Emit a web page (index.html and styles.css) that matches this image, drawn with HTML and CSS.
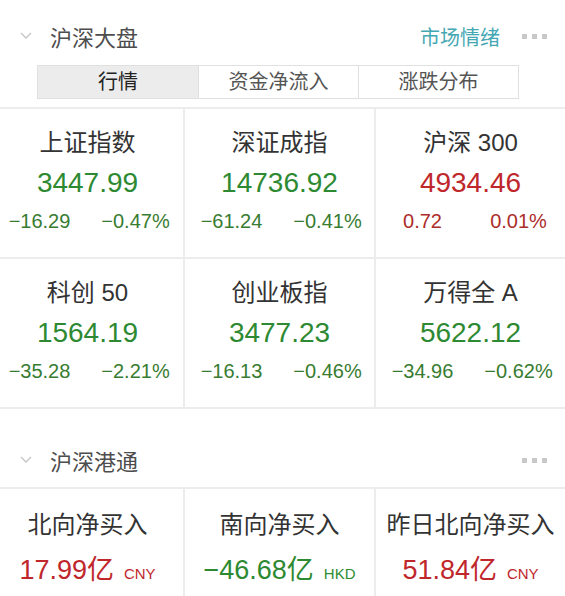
FILE: index.html
```html
<!DOCTYPE html>
<html lang="zh-CN">
<head>
<meta charset="UTF-8" />
<meta name="viewport" content="width=device-width, initial-scale=1.0"/>
<title>沪深大盘</title>
<link rel="stylesheet" href="styles.css">
</head>
<body>

<!-- 沪深大盘 -->
<div class="section-head">
  <svg class="chevron" width="12" height="8" viewBox="0 0 12 8"><path d="M1 1 L6 6 L11 1" fill="none" stroke="#c4c4c4" stroke-width="1.3"/></svg>
  <span class="section-title">沪深大盘</span>
  <span class="section-link">市场情绪</span>
  <span class="dots"><i></i><i></i><i></i></span>
</div>

<div class="tabs">
  <div class="tab active">行情</div>
  <div class="tab">资金净流入</div>
  <div class="tab">涨跌分布</div>
</div>

<div class="grid">
  <div class="cell">
    <div class="name">上证指数</div>
    <div class="value down">3447.99</div>
    <div class="change down"><span>−16.29</span><span>−0.47%</span></div>
  </div>
  <div class="cell">
    <div class="name">深证成指</div>
    <div class="value down">14736.92</div>
    <div class="change down"><span>−61.24</span><span>−0.41%</span></div>
  </div>
  <div class="cell">
    <div class="name">沪深 300</div>
    <div class="value up">4934.46</div>
    <div class="change up"><span>0.72</span><span>0.01%</span></div>
  </div>
  <div class="cell">
    <div class="name">科创 50</div>
    <div class="value down">1564.19</div>
    <div class="change down"><span>−35.28</span><span>−2.21%</span></div>
  </div>
  <div class="cell">
    <div class="name">创业板指</div>
    <div class="value down">3477.23</div>
    <div class="change down"><span>−16.13</span><span>−0.46%</span></div>
  </div>
  <div class="cell">
    <div class="name">万得全 A</div>
    <div class="value down">5622.12</div>
    <div class="change down"><span>−34.96</span><span>−0.62%</span></div>
  </div>
</div>

<!-- 沪深港通 -->
<div class="section-head second">
  <svg class="chevron" width="12" height="8" viewBox="0 0 12 8"><path d="M1 1 L6 6 L11 1" fill="none" stroke="#c4c4c4" stroke-width="1.3"/></svg>
  <span class="section-title">沪深港通</span>
  <span class="dots"><i></i><i></i><i></i></span>
</div>

<div class="grid flow">
  <div class="cell">
    <div class="name">北向净买入</div>
    <div class="value up">17.99亿<small>CNY</small></div>
  </div>
  <div class="cell">
    <div class="name">南向净买入</div>
    <div class="value down">−46.68亿<small>HKD</small></div>
  </div>
  <div class="cell">
    <div class="name">昨日北向净买入</div>
    <div class="value up">51.84亿<small>CNY</small></div>
  </div>
</div>

</body>
</html>
```

FILE: styles.css
```css
body {
  margin: 0;
  background: #fff;
  font-family: "Liberation Sans", "Noto Sans CJK SC", sans-serif;
  color: #333;
  overflow: hidden;
}

/* section header row */
.section-head {
  display: flex;
  align-items: center;
  height: 40px;
  margin-top: 16px;
  padding: 0 18px 0 20px;
}
.section-head.second {
  margin-top: 31px;
}
.chevron {
  margin-right: 18px;
}
.section-title {
  font-size: 22px;
  color: #4d4d4d;
  flex: 1;
}
.section-link {
  font-size: 20px;
  color: #45a7b3;
  margin-right: 22px;
}
.dots {
  display: flex;
  gap: 5px;
}
.dots i {
  width: 5px;
  height: 5px;
  background: #c8c8c8;
}

/* tabs */
.tabs {
  display: grid;
  grid-template-columns: repeat(3, 1fr);
  width: 480px;
  margin: 9px 0 0 37px;
  border: 1px solid #e0e0e0;
}
.tab {
  height: 32px;
  line-height: 32px;
  text-align: center;
  font-size: 20px;
  color: #555;
  border-left: 1px solid #e0e0e0;
}
.tab:first-child {
  border-left: none;
}
.tab.active {
  background: #ececec;
  color: #222;
}

/* index grid */
.grid {
  display: grid;
  grid-template-columns: repeat(3, 191px);
  margin: 8px 0 0 -8px;
  border-top: 2px solid #ececec;
}
.grid.flow {
  margin-top: 7px;
}
.cell {
  height: 148px;
  border-bottom: 2px solid #ececec;
  border-left: 2px solid #ececec;
  text-align: center;
}
.cell:nth-child(3n+1) {
  border-left: none;
}
.flow .cell {
  height: 120px;
  border-bottom: none;
}
.name {
  margin-top: 19px;
  font-size: 24px;
  line-height: 30px;
  color: #333;
}
.value {
  margin-top: 8px;
  font-size: 28px;
  line-height: 34px;
}
.flow .name {
  margin-top: 21px;
}
.flow .value {
  margin-top: 13px;
  font-size: 27px;
}
.value small {
  font-size: 15px;
  margin-left: 10px;
}
.change {
  display: grid;
  grid-template-columns: 96px 96px;
  justify-content: center;
  margin-top: 9px;
  font-size: 20px;
  line-height: 24px;
}
.down {
  color: #2e8a32;
}
.up {
  color: #c0272b;
}
.change.down {
  color: #377c31;
}
.change.up {
  color: #ad2d2a;
}
```
